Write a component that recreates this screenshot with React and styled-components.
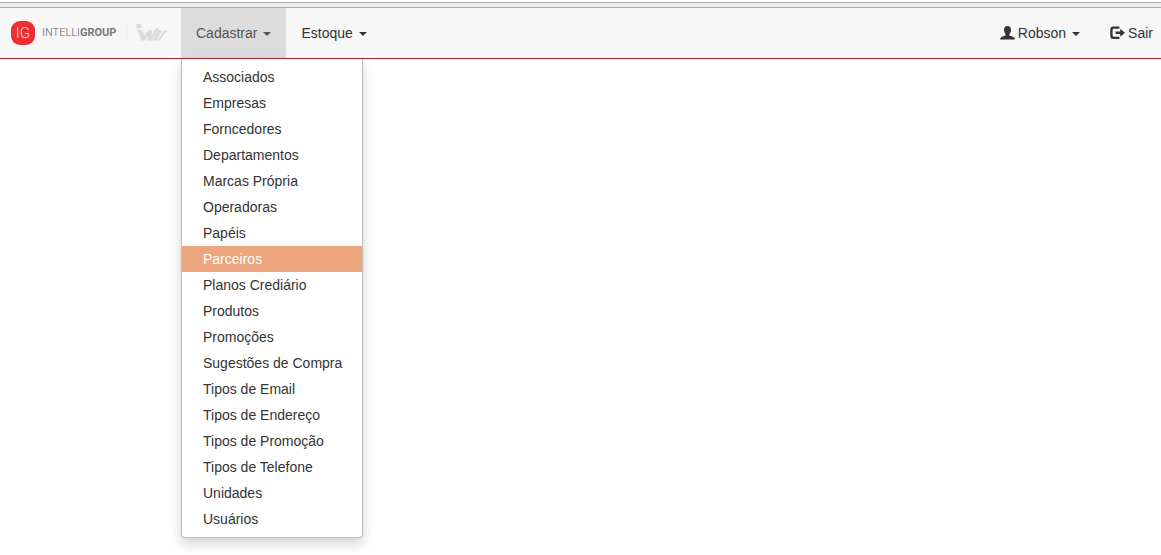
import React from "react";
import styled, { createGlobalStyle } from "styled-components";

const GlobalStyle = createGlobalStyle`
  *, *::before, *::after { box-sizing: border-box; }
  body {
    margin: 0;
    background: #fff;
    color: #333;
    font-family: "Liberation Sans", Arial, sans-serif;
    font-size: 14px;
    line-height: 20px;
  }
`;

const Page = styled.div`
  display: flex;
  flex-direction: column;
  min-height: 100vh;
  padding-top: 2px;
`;

const TopStrip = styled.div`
  height: 6px;
  border-top: 1px solid #a9a9a9;
  border-bottom: 1px solid #a9a9a9;
  background: #f1f1f1;
`;

const Navbar = styled.nav`
  display: flex;
  align-items: stretch;
  background: #f7f7f7;
  border-bottom: 1px solid #a9242f;
`;

const Brand = styled.a`
  display: flex;
  align-items: center;
  flex: none;
  width: 181px;
  padding-left: 11px;
  color: #666462;
  font-family: Roboto, "Liberation Sans", sans-serif;
  font-size: 11px;
  font-weight: 300;
  text-decoration: none;
`;

const Badge = styled.span`
  display: flex;
  align-items: center;
  justify-content: center;
  flex: none;
  width: 24px;
  height: 24px;
  margin-right: 7px;
  border-radius: 9px;
  background: #ed2f33;
  color: #fbd3cf;
  font-size: 15px;
`;

const BrandName = styled.span`
  width: 77px;
  white-space: nowrap;
`;

const BrandBold = styled.b`
  font-weight: 700;
  color: #7b7977;
`;

const Divider = styled.span`
  width: 1px;
  height: 20px;
  margin: 0 9px 0 7px;
  background: #ededed;
`;

const NavList = styled.ul`
  display: flex;
  margin: 0;
  padding: 0;
  list-style: none;
  margin-left: ${(p) => (p.$end ? "auto" : "0")};
  padding-right: ${(p) => (p.$end ? "8px" : "0")};
  gap: ${(p) => (p.$end ? "30px" : "0")};
`;

const NavItem = styled.li`
  position: relative;
`;

const NavButton = styled.button`
  display: flex;
  align-items: center;
  height: 50px;
  padding: ${(p) => (p.$flush ? "0" : "0 15px")};
  border: 0;
  background: ${(p) => (p.$open ? "#dcdcdc" : "transparent")};
  color: ${(p) => (p.$open ? "#555" : "#333")};
  font: inherit;
  white-space: nowrap;
  cursor: pointer;
`;

const Caret = styled.span`
  margin-top: 2px;
  margin-left: 6px;
  border-top: 4px solid;
  border-left: 4px solid transparent;
  border-right: 4px solid transparent;
`;

const Icon = styled.svg`
  width: 15px;
  height: 14px;
  margin-right: 3px;
  fill: #333;
`;

const Menu = styled.ul`
  position: absolute;
  z-index: 10;
  top: 100%;
  left: 0;
  margin: 1px 0 0;
  padding: 5px 0;
  list-style: none;
  background: #fff;
  border: 1px solid #bdbdbd;
  border-top: 0;
  border-radius: 0 0 4px 4px;
  box-shadow: 0 6px 12px rgba(0, 0, 0, 0.175);
`;

const MenuLink = styled.a`
  display: block;
  padding: 3px 20px 3px 21px;
  background: ${(p) => (p.$active ? "#eca57c" : "transparent")};
  color: ${(p) => (p.$active ? "#fff" : "#333")};
  text-decoration: none;
  white-space: nowrap;
`;

const entries = [
  "Associados",
  "Empresas",
  "Forncedores",
  "Departamentos",
  "Marcas Própria",
  "Operadoras",
  "Papéis",
  "Parceiros",
  "Planos Crediário",
  "Produtos",
  "Promoções",
  "Sugestões de Compra",
  "Tipos de Email",
  "Tipos de Endereço",
  "Tipos de Promoção",
  "Tipos de Telefone",
  "Unidades",
  "Usuários",
];

function PartnerMark() {
  return (
    <svg width="33" height="20" viewBox="0 0 33 20" fill="#dadada" aria-hidden="true">
      <circle cx="3" cy="3" r="2.6" />
      <path d="M.8 7H4.2Q6.3 7 6.9 9L8 12.8 12.6 7H16.4L15.6 12.4 19.6 5.6H23.2L15.8 17.4H11.4L12.2 12.8 8.6 17.4H5.2L3 10.2Q2.5 8.4 .8 8Z" />
      <path d="M22.4 7.4H26L20.2 17.4H16.6Z" />
      <path d="M27.6 7.4H31.6L30.4 9.8H28.8L25.6 15Q24 17.4 21.6 17.4H20.8L22.4 14.8H23.2Z" />
    </svg>
  );
}

function UserIcon() {
  return (
    <Icon viewBox="0 0 15 14" aria-hidden="true">
      <path d="M7.5 0C9.8 0 11 1.5 11 3.8 11 5.6 10.3 7.2 9.4 8V9.2C9.8 9.9 12 10.2 13.4 11 14.4 11.6 14.8 12 14.8 13.6H.2C.2 12 .6 11.6 1.6 11 3 10.2 5.2 9.9 5.6 9.2V8C4.7 7.2 4 5.6 4 3.8 4 1.5 5.2 0 7.5 0Z" />
    </Icon>
  );
}

function LogoutIcon() {
  return (
    <Icon viewBox="0 0 15 14" aria-hidden="true">
      <path d="M3.2.6H9.4V2.8H4Q2.6 2.8 2.6 4.1V9.5Q2.6 10.8 4 10.8H9.4V13H3.2Q.3 13 .3 10.1V3.5Q.3.6 3.2.6Z" />
      <path d="M10.2 2.8 15 6.8 10.2 10.8V8H5.6V5.6H10.2Z" />
    </Icon>
  );
}

export default function App() {
  return (
    <Page>
      <GlobalStyle />
      <TopStrip />
      <Navbar>
        <Brand href="#">
          <Badge>IG</Badge>
          <BrandName>
            INTELLI<BrandBold>GROUP</BrandBold>
          </BrandName>
          <Divider />
          <PartnerMark />
        </Brand>
        <NavList>
          <NavItem>
            <NavButton $open aria-expanded="true">
              Cadastrar
              <Caret />
            </NavButton>
            <Menu>
              {entries.map((name) => (
                <li key={name}>
                  <MenuLink href="#" $active={name === "Parceiros"}>
                    {name}
                  </MenuLink>
                </li>
              ))}
            </Menu>
          </NavItem>
          <NavItem>
            <NavButton aria-expanded="false">
              Estoque
              <Caret />
            </NavButton>
          </NavItem>
        </NavList>
        <NavList $end>
          <NavItem>
            <NavButton $flush aria-expanded="false">
              <UserIcon />
              Robson
              <Caret />
            </NavButton>
          </NavItem>
          <NavItem>
            <NavButton $flush>
              <LogoutIcon />
              Sair
            </NavButton>
          </NavItem>
        </NavList>
      </Navbar>
    </Page>
  );
}
